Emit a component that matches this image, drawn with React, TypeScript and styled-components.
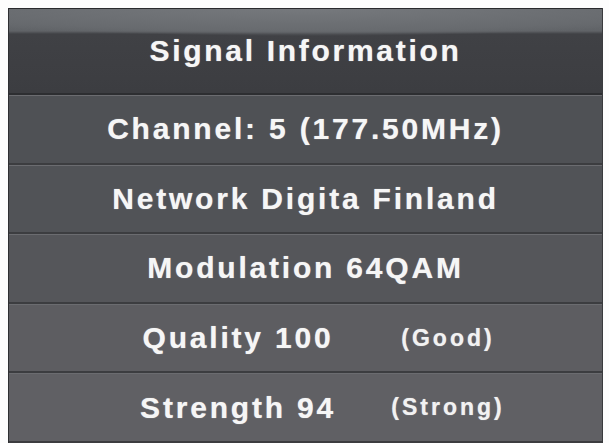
import React from "react";
import styled, { createGlobalStyle } from "styled-components";

const GlobalStyle = createGlobalStyle`
  html, body {
    margin: 0;
    padding: 0;
    background: #fdfdfd;
  }
  body {
    font-family: "Liberation Sans", Arial, sans-serif;
  }
`;

type Info = {
  label: string;
  note?: string;
  tone: string;
};

const rows: Info[] = [
  { label: "Channel: 5 (177.50MHz)", tone: "#4f5155" },
  { label: "Network Digita Finland", tone: "#515357" },
  { label: "Modulation 64QAM", tone: "#55565a" },
  { label: "Quality 100", note: "(Good)", tone: "#5d5d61" },
  { label: "Strength 94", note: "(Strong)", tone: "#606064" },
];

const App = () => {
  return (
    <>
      <GlobalStyle />
      <Panel>
        <Header>
          <Title>Signal Information</Title>
        </Header>
        {rows.map((row) =>
          row.note ? (
            <SplitRow key={row.label} tone={row.tone}>
              <Label>{row.label}</Label>
              <Note>{row.note}</Note>
            </SplitRow>
          ) : (
            <Row key={row.label} tone={row.tone}>
              <Label>{row.label}</Label>
            </Row>
          )
        )}
      </Panel>
    </>
  );
};

export default App;

const Panel = styled.div`
  display: flex;
  flex-direction: column;
  width: 595px;
  height: 435px;
  margin: 8px 0 0 8px;
  background: #55565a;
  border-left: 1px solid #2e2f32;
  border-right: 1px solid #3a3b3e;
  box-sizing: border-box;
  overflow: hidden;
`;

const Header = styled.div`
  height: 87px;
  display: flex;
  align-items: center;
  justify-content: center;
  box-sizing: border-box;
  background:
    radial-gradient(ellipse 75% 28px at 50% 0, #76797d 0%, #686b6f 80%, rgba(0, 0, 0, 0) 100%),
    linear-gradient(#6b6e72 0px, #606367 23px, #404145 26px, #3c3d41 84px);
  border-bottom: 2px solid #2d2e31;
  box-shadow: inset 0 1px 0 #2a2b2e;
`;

const Title = styled.span`
  color: #f6f6f6;
  font-size: 30px;
  font-weight: 700;
  letter-spacing: 2.7px;
  text-shadow: 0 0 1px rgba(255, 255, 255, 0.6);
`;

const Row = styled.div<{ tone: string }>`
  flex: 1;
  display: flex;
  align-items: center;
  justify-content: center;
  background: ${(p) => p.tone};
  border-top: 1px solid #6b6c70;
  border-bottom: 2px solid #3c3d40;
  box-sizing: border-box;
`;

const SplitRow = styled(Row)`
  display: grid;
  grid-template-columns: 274px 146px;
  padding-left: 92px;
  justify-content: start;
  align-items: center;
  justify-items: center;
`;

const Label = styled.span`
  color: #f6f6f6;
  font-size: 30px;
  font-weight: 700;
  letter-spacing: 2.8px;
  text-shadow: 0 0 1px rgba(255, 255, 255, 0.6);
`;

const Note = styled.span`
  color: #f2f2f2;
  font-size: 23px;
  font-weight: 700;
  letter-spacing: 3px;
  text-shadow: 0 0 1px rgba(255, 255, 255, 0.6);
`;
